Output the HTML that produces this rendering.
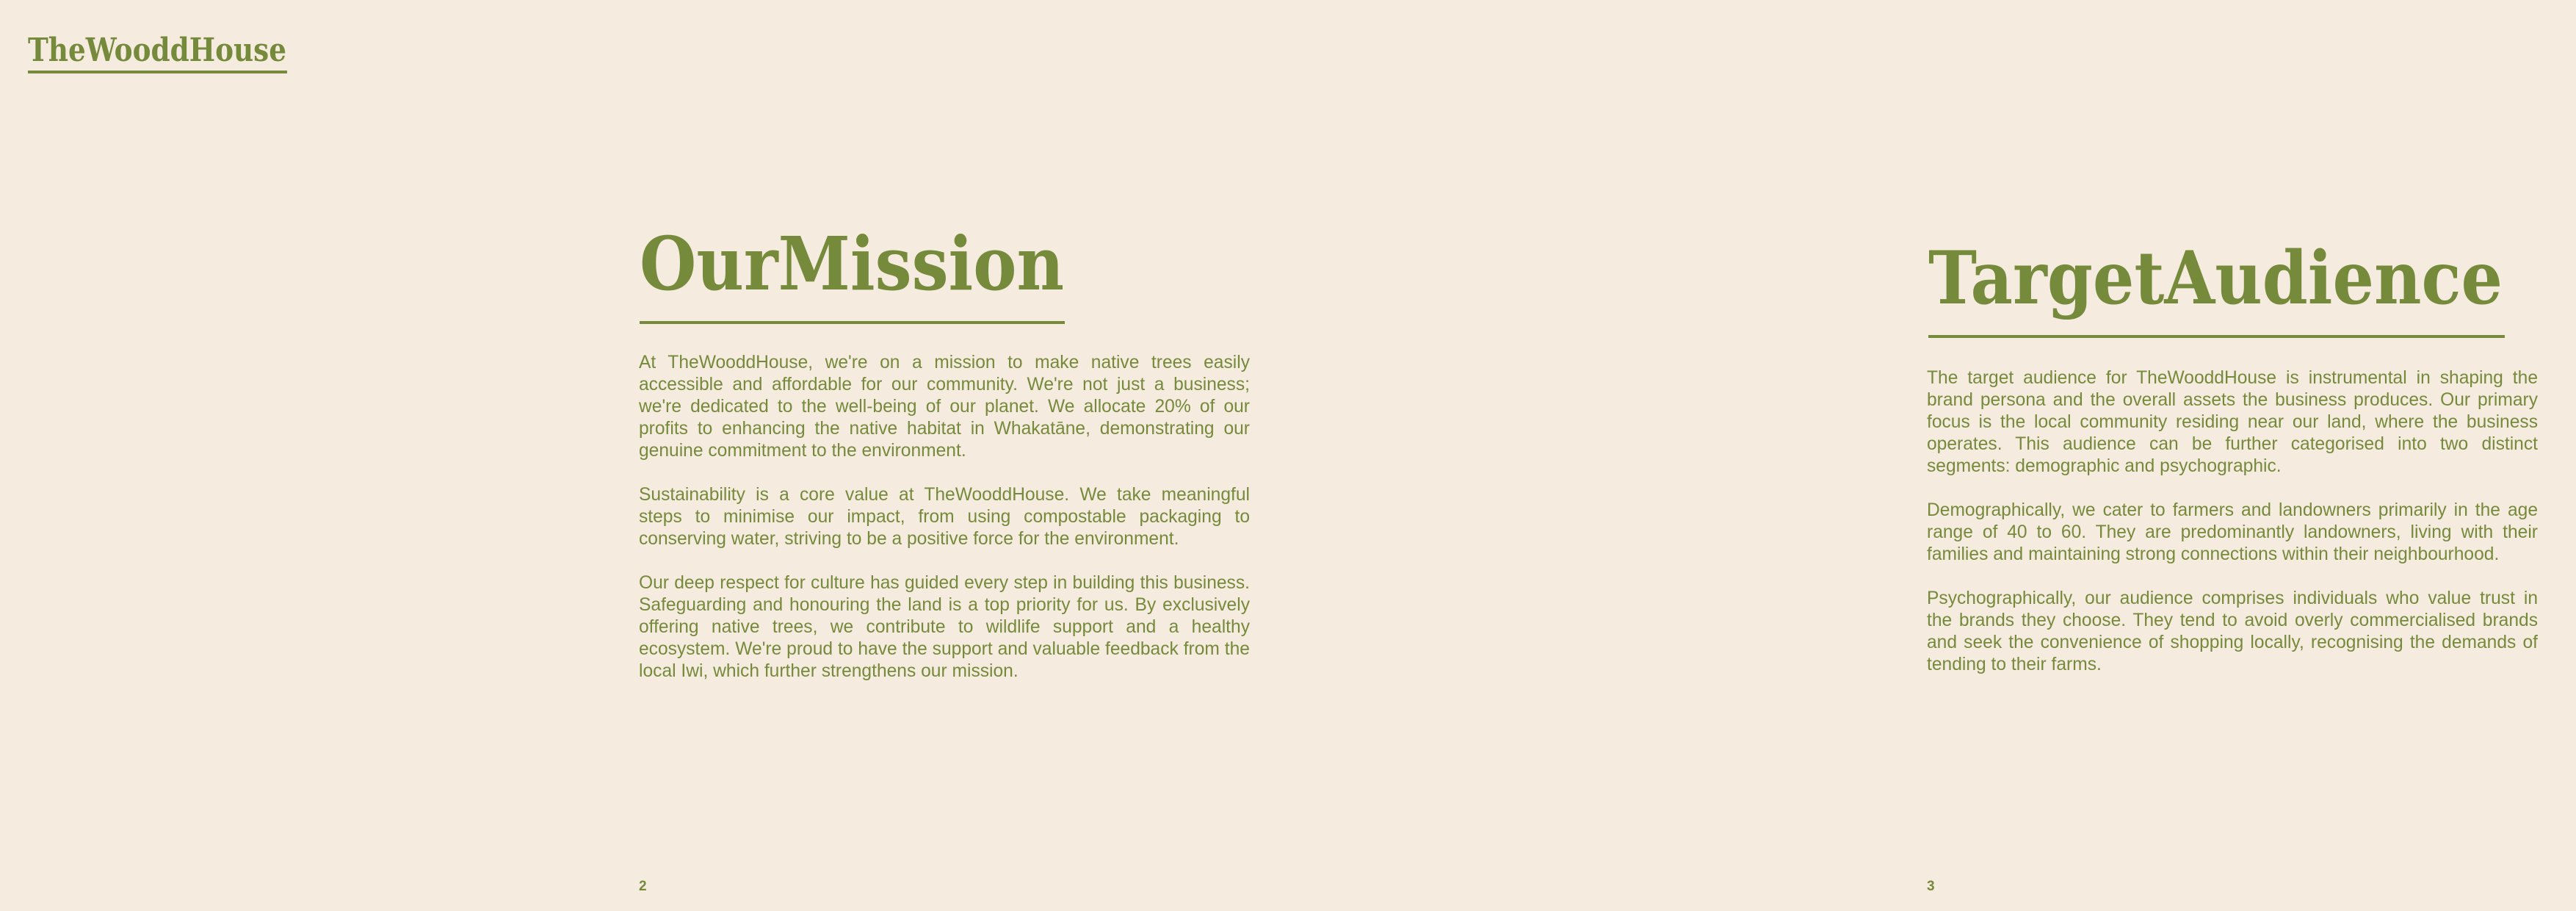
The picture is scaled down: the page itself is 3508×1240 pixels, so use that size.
<!DOCTYPE html>
<html><head><meta charset="utf-8"><style>
html,body{margin:0;padding:0}
body{width:3508px;height:1240px;background:#f5ebdf;position:relative;overflow:hidden;color:#768a3b;font-family:"Liberation Sans",Arial,sans-serif}
svg{position:absolute;overflow:visible}
.rule{position:absolute;background:#768a3b}
.body{position:absolute;font-size:24.6px;line-height:30px;text-align:justify;margin:0}
.body p{margin:0 0 30px 0}
.pn{position:absolute;font-size:19px;font-weight:bold;top:1196px}
</style></head><body>
<svg style="left:0;top:0" width="3508" height="1240">
<text x="38" y="83" font-family="DejaVu Serif" font-weight="bold" font-size="44" fill="#768a3b" textLength="352" lengthAdjust="spacingAndGlyphs">TheWooddHouse</text>
<text x="871" y="394" font-family="DejaVu Serif" font-weight="bold" font-size="100" fill="#768a3b" textLength="578" lengthAdjust="spacingAndGlyphs">OurMission</text>
<text x="2626" y="413" font-family="DejaVu Serif" font-weight="bold" font-size="99" fill="#768a3b" textLength="782" lengthAdjust="spacingAndGlyphs">TargetAudience</text>
</svg>
<div class="rule" style="left:38px;top:96px;width:353px;height:4px"></div>
<div class="rule" style="left:871px;top:437px;width:579px;height:4px"></div>
<div class="rule" style="left:2626px;top:456px;width:785px;height:4px"></div>
<div class="body" style="left:870px;top:479px;width:832px">
<p>At TheWooddHouse, we're on a mission to make native trees easily accessible and affordable for our community. We're not just a business; we're dedicated to the well-being of our planet. We allocate 20% of our profits to enhancing the native habitat in Whakatāne, demonstrating our genuine commitment to the environment.</p>
<p>Sustainability is a core value at TheWooddHouse. We take meaningful steps&nbsp;to minimise our impact, from using compostable packaging to conserving water, striving to be a positive force for the environment.</p>
<p>Our deep respect for culture has guided every step in building this business. Safeguarding and honouring the land is a top priority for us. By exclusively offering native trees, we contribute to wildlife support and a healthy ecosystem. We're proud to have the support and valuable feedback from the local Iwi, which further strengthens our mission.</p>
</div>
<div class="body" style="left:2624px;top:500px;width:832px">
<p>The target audience for TheWooddHouse is instrumental in shaping the brand persona and the overall assets the business produces. Our primary focus is the local community residing near our land, where the business operates. This audience can be further categorised into two distinct segments: demographic and psychographic.</p>
<p>Demographically, we cater to farmers and landowners primarily in the age range of 40 to 60. They are predominantly landowners, living with their families and maintaining strong connections within their neighbourhood.</p>
<p>Psychographically, our audience comprises individuals who value trust in the brands they choose. They tend to avoid overly commercialised brands and seek the convenience of shopping locally, recognising the demands of tending to their farms.</p>
</div>
<div class="pn" style="left:870px">2</div>
<div class="pn" style="left:2624px">3</div>
</body></html>
